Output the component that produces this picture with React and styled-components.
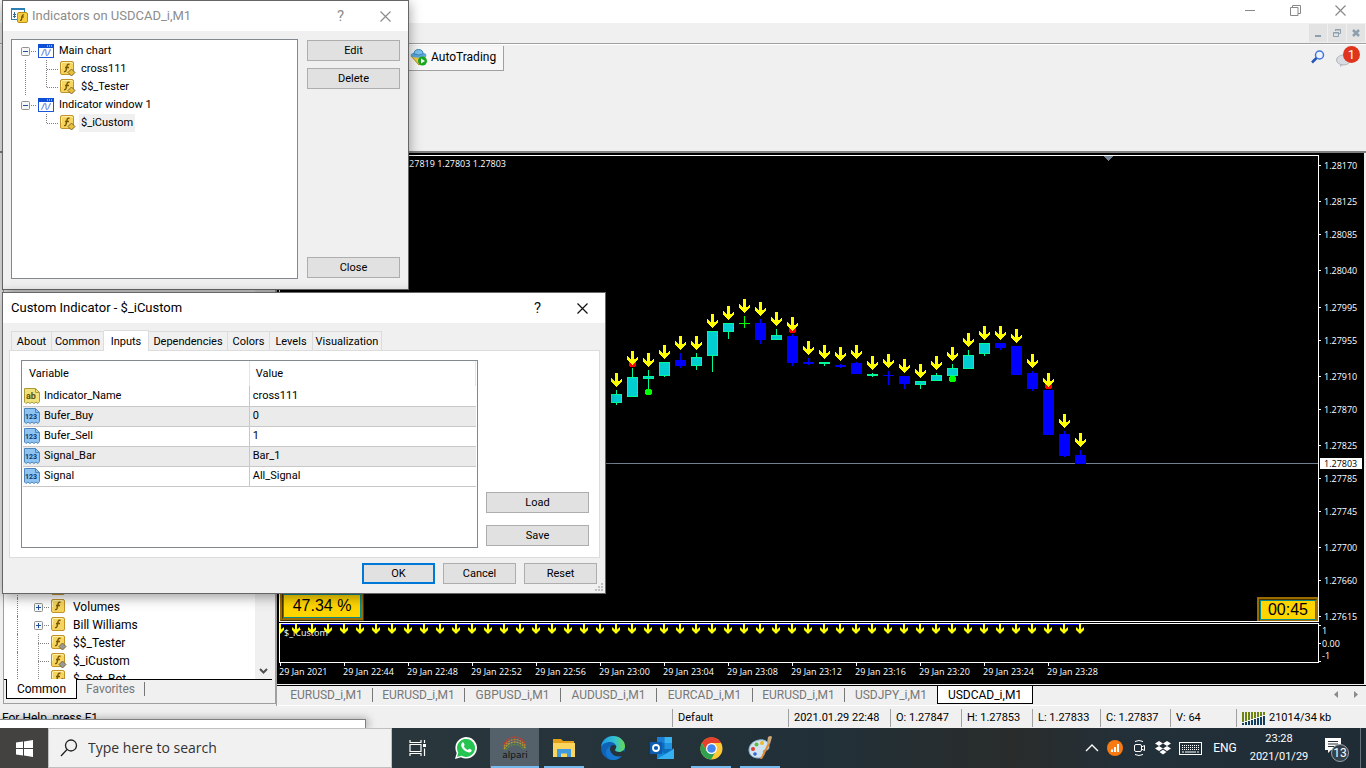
import React from 'react'
import styled, { createGlobalStyle } from 'styled-components'

const candles = [
	{ x: 616, kind: 'up', body: [394, 403], wick: [390, 405], arrow: 373 },
	{ x: 632, kind: 'up', body: [377, 397], wick: [368, 397], arrow: 351, dot: ['#f00', 364] },
	{ x: 648, kind: 'up', body: [376, 379], wick: [370, 391], arrow: 353, dot: ['#0f0', 392] },
	{ x: 664, kind: 'up', body: [362, 376], wick: [362, 377], arrow: 345 },
	{ x: 680, kind: 'down', body: [360, 366], wick: [353, 368], arrow: 336 },
	{ x: 696, kind: 'up', body: [357, 366], wick: [353, 370], arrow: 336 },
	{ x: 712, kind: 'up', body: [331, 356], wick: [331, 372], arrow: 314 },
	{ x: 728, kind: 'up', body: [323, 332], wick: [323, 339], arrow: 306 },
	{ x: 744, kind: 'doji', body: [323, 324], wick: [316, 328], arrow: 299 },
	{ x: 760, kind: 'down', body: [323, 340], wick: [319, 344], arrow: 302 },
	{ x: 776, kind: 'up', body: [335, 340], wick: [329, 340], arrow: 312 },
	{ x: 792, kind: 'down', body: [336, 363], wick: [334, 366], arrow: 317, dot: ['#f00', 330] },
	{ x: 808, kind: 'down', body: [362, 364], wick: [358, 365], arrow: 341 },
	{ x: 824, kind: 'up', body: [362, 364], wick: [362, 366], arrow: 345 },
	{ x: 840, kind: 'down', body: [365, 367], wick: [364, 368], arrow: 347 },
	{ x: 856, kind: 'down', body: [363, 374], wick: [362, 374], arrow: 345 },
	{ x: 872, kind: 'up', body: [374, 376], wick: [373, 377], arrow: 356 },
	{ x: 888, kind: 'down', body: [375, 376], wick: [371, 385], arrow: 354 },
	{ x: 904, kind: 'down', body: [376, 384], wick: [376, 389], arrow: 359 },
	{ x: 920, kind: 'up', body: [381, 385], wick: [381, 389], arrow: 364 },
	{ x: 936, kind: 'up', body: [375, 381], wick: [373, 381], arrow: 356 },
	{ x: 952, kind: 'up', body: [368, 376], wick: [364, 376], arrow: 347, dot: ['#0f0', 379] },
	{ x: 968, kind: 'up', body: [355, 369], wick: [350, 369], arrow: 333 },
	{ x: 984, kind: 'up', body: [343, 354], wick: [343, 356], arrow: 326 },
	{ x: 1000, kind: 'down', body: [343, 348], wick: [343, 350], arrow: 326 },
	{ x: 1016, kind: 'down', body: [346, 375], wick: [346, 375], arrow: 329 },
	{ x: 1032, kind: 'down', body: [373, 389], wick: [371, 391], arrow: 354 },
	{ x: 1048, kind: 'down', body: [390, 435], wick: [390, 435], arrow: 373, dot: ['#f00', 386] },
	{ x: 1064, kind: 'down', body: [434, 456], wick: [431, 457], arrow: 414 },
	{ x: 1080, kind: 'down', body: [455, 464], wick: [450, 464], arrow: 433 },
]
const wickColors = { up: '#00fa9a', down: '#00f', doji: '#0f0' }
const bodyColors = { up: '#00ced1', down: '#00f', doji: '#0f0' }

const prices = [
	['1.28170', 165], ['1.28125', 201], ['1.28085', 234], ['1.28040', 270], ['1.27995', 307],
	['1.27955', 340], ['1.27910', 376], ['1.27870', 409], ['1.27825', 445], ['1.27785', 478],
	['1.27745', 511], ['1.27700', 547], ['1.27660', 580], ['1.27615', 616],
]
const times = ['2021', '22:44', '22:48', '22:52', '22:56', '23:00', '23:04', '23:08', '23:12', '23:16', '23:20', '23:24', '23:28']
const chartTabs = [
	['EURUSD_i,M1', 92], ['EURUSD_i,M1', 92], ['GBPUSD_i,M1', 96], ['AUDUSD_i,M1', 96],
	['EURCAD_i,M1', 96], ['EURUSD_i,M1', 92], ['USDJPY_i,M1', 92],
]
const statusCells = [
	['Default', 116], ['2021.01.29 22:48', 102], ['O: 1.27847', 71], ['H: 1.27853', 71],
	['L: 1.27833', 68], ['C: 1.27837', 70], ['V: 64', 66],
]
const inputs = [
	{ name: 'Indicator_Name', value: 'cross111', text: true },
	{ name: 'Bufer_Buy', value: '0' },
	{ name: 'Bufer_Sell', value: '1' },
	{ name: 'Signal_Bar', value: 'Bar_1' },
	{ name: 'Signal', value: 'All_Signal' },
]

export default function App() {
	return (
		<>
			<GlobalStyle />
			<Desktop>
				<TitleBar>
					<WindowControl aria-label="Minimize"><svg width="11" height="11"><path d="M0 5.500h10" stroke="#888" /></svg></WindowControl>
					<WindowControl aria-label="Restore"><svg width="11" height="11" fill="none" stroke="#888"><path d="M.5 2.500h7.500v8H.5zM2.500 2.500V.5h8v8H8" /></svg></WindowControl>
					<WindowControl aria-label="Close window"><CloseIcon color="#888" /></WindowControl>
				</TitleBar>
				<MenuBar>
					<MdiButton aria-label="Minimize chart"><svg width="10" height="10"><path d="M2 8h6" stroke="#8b9fae" strokeWidth="2" /></svg></MdiButton>
					<MdiButton aria-label="Restore chart"><svg width="10" height="10" fill="none" stroke="#8b9fae"><path d="M1.500 4.500h5v4h-5zM1 5h6M3.500 3V1.500h5v4H7M3 2h6" /></svg></MdiButton>
					<MdiButton aria-label="Close chart"><svg width="10" height="10"><path d="M2 2l6 6M8 2L2 8" stroke="#8b9fae" strokeWidth="2.500" /></svg></MdiButton>
				</MenuBar>
				<ToolBar>
					<AutoTrading><HatIcon />AutoTrading</AutoTrading>
					<ToolBarEnd>
						<svg width="14" height="14" fill="none"><circle cx="8.500" cy="5" r="4" fill="#eef4ff" stroke="#3f76d8" strokeWidth="1.500" /><path d="M5.500 8L1 12.500" stroke="#2356b8" strokeWidth="2.500" /></svg>
						<Messages />
					</ToolBarEnd>
				</ToolBar>
				<Workspace>
					<Navigator />
					<Chart />
				</Workspace>
				<StatusBar>
					<HelpText>For Help, press F1</HelpText>
					{statusCells.map(([text, width]) => <StatusCell key={text} $width={width}>{text}</StatusCell>)}
					<StatusCell $width={130}><TrafficIcon />21014/34 kb</StatusCell>
					<BackWindow />
				</StatusBar>
				<Taskbar />
				<IndicatorsDialog />
				<CustomDialog />
			</Desktop>
		</>
	)
}

function IndicatorsDialog() {
	return (
		<DialogFrame $left={2} $top={0} $width={407} $height={290} role="dialog" aria-label="Indicators">
			<DialogTitle $muted>
				<WindowFIcon />
				<span>Indicators on USDCAD_i,M1</span>
				<DialogControls $color="#8c8c8c" />
			</DialogTitle>
			<ListBody>
				<TreeBox>
					<Branch>
						<BranchHead><Toggle sign="-" /><Dots /><ChartIcon />Main chart</BranchHead>
						<Leaves>
							<Leaf><Dots $wide /><FIcon badge="#e8bf3a" /><LeafName>cross111</LeafName></Leaf>
							<Leaf $last><Dots $wide /><FIcon badge="#e8bf3a" /><LeafName>$$_Tester</LeafName></Leaf>
						</Leaves>
					</Branch>
					<Branch $last>
						<BranchHead><Toggle sign="-" /><Dots /><ChartIcon />Indicator window 1</BranchHead>
						<Leaves>
							<Leaf $last><Dots $wide /><FIcon badge="#e8bf3a" /><LeafName $selected>$_iCustom</LeafName></Leaf>
						</Leaves>
					</Branch>
				</TreeBox>
				<ButtonColumn>
					<Button>Edit</Button>
					<Button>Delete</Button>
					<Button $push>Close</Button>
				</ButtonColumn>
			</ListBody>
		</DialogFrame>
	)
}

function CustomDialog() {
	return (
		<DialogFrame $left={2} $top={292} $width={604} $height={302} role="dialog" aria-label="Custom Indicator">
			<DialogTitle>
				<span>Custom Indicator - $_iCustom</span>
				<DialogControls $color="#111" />
			</DialogTitle>
			<TabStrip role="tablist">
				<Tab $width={41}>About</Tab>
				<Tab $width={52}>Common</Tab>
				<Tab $width={45} $active>Inputs</Tab>
				<Tab $width={79}>Dependencies</Tab>
				<Tab $width={42}>Colors</Tab>
				<Tab $width={43}>Levels</Tab>
				<Tab $width={69}>Visualization</Tab>
			</TabStrip>
			<TabPanel>
				<GridBox>
					<Grid>
						<thead><tr><th>Variable</th><th>Value</th></tr></thead>
						<tbody>
							{inputs.map(item => (
								<tr key={item.name}>
									<td><Cell><TypeIcon text={item.text} />{item.name}</Cell></td>
									<td>{item.value}</td>
								</tr>
							))}
						</tbody>
					</Grid>
				</GridBox>
				<PanelButtons>
					<Button>Load</Button>
					<Button>Save</Button>
				</PanelButtons>
			</TabPanel>
			<DialogFooter>
				<Button $width={73} $primary>OK</Button>
				<Button $width={73}>Cancel</Button>
				<Button $width={73}>Reset</Button>
			</DialogFooter>
			<Grip width="8" height="8" fill="#bfbfbf"><path d="M6 0h2v2H6zM3 3h2v2H3zM6 3h2v2H6zM0 6h2v2H0zM3 6h2v2H3zM6 6h2v2H6z" /></Grip>
		</DialogFrame>
	)
}

function DialogControls({ $color }) {
	return (
		<Controls>
			<WindowControl aria-label="Help" style={{ color: $color }}>?</WindowControl>
			<WindowControl aria-label="Close"><CloseIcon color={$color} /></WindowControl>
		</Controls>
	)
}

function Navigator() {
	return (
		<NavPanel>
			<NavBody>
				<NavTree>
					<NavRow><Toggle sign="+" /><Dots /><FIcon />Oscillators</NavRow>
					<NavRow><Toggle sign="+" /><Dots /><FIcon />Volumes</NavRow>
					<NavRow><Toggle sign="+" /><Dots /><FIcon />Bill Williams</NavRow>
					<NavRow $leaf><Dots $wide /><FIcon badge="#999" />$$_Tester</NavRow>
					<NavRow $leaf><Dots $wide /><FIcon badge="#999" />$_iCustom</NavRow>
					<NavRow $leaf $clipped><Dots $wide /><FIcon badge="#999" />$_Set_Bot</NavRow>
				</NavTree>
				<Scroll><svg width="9" height="6" fill="none"><path d="M1 1l3.500 3.500L8 1" stroke="#505050" strokeWidth="2" /></svg></Scroll>
			</NavBody>
			<NavTabs>
				<NavTab $active>Common</NavTab>
				<NavTab>Favorites</NavTab>
			</NavTabs>
		</NavPanel>
	)
}

function Chart() {
	return (
		<ChartColumn>
			<ChartFrame>
				<PriceRow>
					<Plot>
						<Drawing>
							<g transform="translate(-280 -156)" shapeRendering="crispEdges">
								<path d="M1103 156h11l-5.500 5z" fill="#708090" />
								<rect x="280" y="463" width="100%" height="1" fill="#708090" />
								{candles.map(candle => <Candle key={candle.x} {...candle} />)}
								<text x="506" y="167" textAnchor="end">1.27851 1.27819 1.27803 1.27803</text>
							</g>
						</Drawing>
						<Percent>47.34 %</Percent>
						<Countdown>00:45</Countdown>
					</Plot>
					<Axis>
						<g transform="translate(-1319 -155)" shapeRendering="crispEdges">
							{prices.map(([label, y]) => (
								<g key={label}>
									<rect x="1319" y={y} width="2" height="1" />
									<text x="1324" y={y + 4}>{label}</text>
								</g>
							))}
							<rect x="1320" y="458" width="42" height="11" />
							<text x="1324" y="467" style={{ fill: '#000' }}>1.27803</text>
						</g>
					</Axis>
				</PriceRow>
				<IndicatorRow>
					<Plot>
						<Drawing>
							<g transform="translate(-280 -624)">
								<rect x="280" y="624" width="802" height="1" fill="#00f" />
								<text x="284" y="636">$_iCustom</text>
								{Array.from({ length: 51 }, (_, i) => (
									<path key={i} transform={`translate(${280 + i * 16} 624)`} d="M-1 0H1V5.500L4 3V6L0 10L-4 6V3L-1 5.500Z" fill="#ff0" />
								))}
							</g>
						</Drawing>
					</Plot>
					<Axis>
						<g transform="translate(-1319 -623)">
							<rect x="1319" y="625" width="2" height="1" />
							<rect x="1319" y="643" width="2" height="1" />
							<rect x="1319" y="661" width="2" height="1" />
							<text x="1322" y="634">1</text>
							<text x="1322" y="647">0.00</text>
							<text x="1322" y="659">-1</text>
						</g>
					</Axis>
				</IndicatorRow>
				<TimeAxis>{times.map(time => <Time key={time}>29 Jan {time}</Time>)}</TimeAxis>
			</ChartFrame>
			<ChartTabs>
				{chartTabs.map(([name, width], i) => <ChartTab key={i} $width={width} $last={i === 6}>{name}</ChartTab>)}
				<ChartTab $width={96} $active>USDCAD_i,M1</ChartTab>
				<TabArrows width="26" height="8" fill="#8a8a8a"><path d="M4 0v7L0 3.500zM20 0v7l4-3.500z" /></TabArrows>
			</ChartTabs>
		</ChartColumn>
	)
}

function Candle({ x, kind, body: [top, bottom], wick, arrow, dot }) {
	return (
		<g>
			<rect x={x} y={wick[0]} width="1" height={wick[1] - wick[0]} fill={wickColors[kind]} />
			<rect x={x - 5} y={top} width="11" height={bottom - top} fill={wickColors[kind]} />
			{bottom - top > 2 && <rect x={x - 4} y={top + 1} width="9" height={bottom - top - 2} fill={bodyColors[kind]} />}
			{dot && <circle cx={x + 0.5} cy={dot[1]} r="3.500" fill={dot[0]} />}
			<path transform={`translate(${x + 0.5} ${arrow})`} d="M-1.500 0H1.500V8H2.500L5.500 5V8L0 14L-5.500 8V5L-2.500 8H-1.500Z" fill="#ff0" />
		</g>
	)
}

function Taskbar() {
	return (
		<Bar>
			<StartButton aria-label="Start">
				<svg width="17" height="17" fill="#fff"><path d="M0 2.500L7 1.500V8H0zM8 1.400L17 0V8H8zM0 9H7V15.500L0 14.500zM8 9H17V17L8 15.600z" /></svg>
			</StartButton>
			<SearchBox>
				<svg width="18" height="18" fill="none" stroke="#222" strokeWidth="1.300"><circle cx="11" cy="6.500" r="5.500" /><path d="M7 10.500L1 17" /></svg>
				<input type="text" aria-label="Search" placeholder="Type here to search" />
			</SearchBox>
			<TaskButton aria-label="Task view"><TaskViewIcon /></TaskButton>
			<TaskButton aria-label="WhatsApp"><WhatsAppIcon /></TaskButton>
			<TaskButton aria-label="Alpari" $line={48} $active><Alpari><AlpariArc />alpari</Alpari></TaskButton>
			<TaskButton aria-label="File Explorer" $line={40}><FolderIcon /></TaskButton>
			<TaskButton aria-label="Edge"><EdgeIcon /></TaskButton>
			<TaskButton aria-label="Outlook"><OutlookIcon /></TaskButton>
			<TaskButton aria-label="Chrome" $line={40}><ChromeIcon /></TaskButton>
			<TaskButton aria-label="Paint" $line={40}><PaintIcon /></TaskButton>
			<Tray>
				<svg width="14" height="8" fill="none"><path d="M1 7l6-6 6 6" stroke="#fff" strokeWidth="1.400" /></svg>
				<svg width="16" height="16"><circle cx="8" cy="8" r="8" fill="#f97a12" /><path d="M4 9.500h2V12H4zM7 7h2v5H7zM10 4h2v8h-2z" fill="#fff" /></svg>
				<svg width="16" height="16" fill="none" stroke="#fff"><rect x="3.500" y="4.500" width="7" height="7" rx="1.500" /><path d="M10.500 7l3-1.500v5l-3-1.500M4 1.500q4-2 8 0M4 14.500q4 2 8 0" /></svg>
				<svg width="16" height="14" fill="#fff"><path d="M4 0l4 2.500L4 5 0 2.500zM12 0l4 2.500L12 5 8 2.500zM4 5l4 2.500L4 10 0 7.500zM12 5l4 2.500L12 10 8 7.500zM4.500 11L8 8.800l3.500 2.200L8 13.500z" /></svg>
				<svg width="23" height="13" fill="none" stroke="#fff"><rect x=".5" y=".5" width="22" height="12" /><path d="M3 3.500h17M3 5.500h17M3 7.500h17" strokeDasharray="1 1" /><path d="M3 10h2M6 10h11M18 10h2" /></svg>
				<Language>ENG</Language>
				<Clock><span>23:28</span><span>2021/01/29</span></Clock>
				<Notices>
					<svg width="26" height="26"><path d="M1 1h16v12H7l-3 3v-3H1z" fill="#fff" /><path d="M4 4.500h10M4 7h10M4 9.500h7" stroke="#263238" /><circle cx="16" cy="16" r="8.500" fill="#33414a" stroke="#9aa3a8" /><text x="16" y="20" textAnchor="middle" fill="#fff">13</text></svg>
				</Notices>
			</Tray>
		</Bar>
	)
}

//-----Icons-----
const CloseIcon = ({ color }) => (
	<svg width="11" height="11"><path d="M.5 .5l10 10M10.500 .5l-10 10" stroke={color} strokeWidth="1.200" /></svg>
)
const Toggle = ({ sign }) => (
	<svg width="9" height="9" fill="none"><rect x=".5" y=".5" width="8" height="8" rx="1" fill="#f7f7f7" stroke="#919191" /><path d={sign === '+' ? 'M2 4.500h5M4.500 2v5' : 'M2 4.500h5'} stroke="#1e4f9e" /></svg>
)
const ChartIcon = () => (
	<svg width="16" height="14" fill="none"><rect x=".5" y=".5" width="15" height="13" fill="#fff" stroke="#1c56d6" /><path d="M0 0h16v4H0z" fill="#0f4fd6" /><path d="M9 2h1M11 2h1M13 2h1" stroke="#fff" /><path d="M3 11.500c2 0 2-6 4-6s0 6 2 6 2-6 4-6" stroke="#7c9ee8" strokeWidth="1.300" /></svg>
)
const FIcon = ({ badge }) => (
	<svg width="16" height="16" fill="none"><rect x=".5" y=".5" width="13" height="13" rx="1.500" fill="#f5d55f" stroke="#c1922a" /><path d="M1.500 8V3q0-1.500 1.500-1.500h8q1.500 0 1.500 1.500" stroke="#fff0a8" /><path d="M9.500 3.500q-2-1-2.500 1.500L6 9.500q-.5 1.500-2 1M5 6.500h4" stroke="#7a5600" strokeWidth="1.400" />{badge && <path d="M11.500 8l3.500 3.500-3.500 3.500L8 11.500z" fill={badge} stroke="#806a34" />}</svg>
)
const WindowFIcon = () => (
	<svg width="17" height="16" fill="none"><rect x=".5" y=".5" width="13" height="11" fill="#fff" stroke="#2c80b4" /><path d="M0 1h14" stroke="#2c80b4" strokeWidth="2" /><path d="M3.500 4v6M2 6.500h3M2 8.500h3" stroke="#326b94" /><rect x="6.500" y="4.500" width="10" height="10" rx="1.500" fill="#f7ce3c" stroke="#bd8b1a" /><path d="M13 7q-1.500-.5-1.800 1l-.7 3.500q-.3 1-1.500.8M10 9h3" stroke="#6d4d00" strokeWidth="1.200" /></svg>
)
const TypeIcon = ({ text }) => (
	<svg width="16" height="16">
		<path d="M.5 .5h11l4 4v9l-1.500 2-2-1.500-2 1.500-2-1.500-2 1.500-2-1.500-2 1.500-1.500-1.500z" fill={text ? '#f2e27c' : '#8fc3f2'} stroke={text ? '#a99b3c' : '#4d86bd'} />
		<path d="M11.500 .5v4h4" fill="none" stroke={text ? '#a99b3c' : '#4d86bd'} />
		<text x="7" y="11" textAnchor="middle" fontSize={text ? 9 : 7} fontWeight="700" fill={text ? '#5c5210' : '#12395f'}>{text ? 'ab' : '123'}</text>
	</svg>
)
const HatIcon = () => (
	<svg width="18" height="17" fill="none"><path d="M1 7l8 9 7-9z" fill="#f2c744" stroke="#b98b1c" /><ellipse cx="8.500" cy="6" rx="8" ry="2.800" fill="#5ba7dc" /><path d="M4 5q0-4.500 4.500-4.500T13 5q-4.500 2-9 0z" fill="#7cc0ea" stroke="#3b86ba" /><circle cx="12.500" cy="12" r="4.500" fill="#16a81e" /><path d="M11 9.500v5l4-2.500z" fill="#fff" /></svg>
)
const Messages = () => (
	<svg width="24" height="22"><ellipse cx="7.500" cy="14" rx="7" ry="5" fill="#d9dbe2" stroke="#b4b6bd" /><path d="M4 18v3l4-3z" fill="#b9bbc2" /><circle cx="15.500" cy="8.500" r="8.500" fill="#e0341c" /><text x="15.500" y="13" textAnchor="middle" fontSize="13" fill="#fff">1</text></svg>
)
const TrafficIcon = () => (
	<svg width="23" height="13">
		{[0, 1, 2, 3, 4, 5, 6, 7].map(i => (
			<g key={i}><rect x={i * 3} y="0" width="2" height={10 - i} fill="#6f8512" /><rect x={i * 3} y={11 - i} width="2" height={2 + i} fill="#123f60" /></g>
		))}
	</svg>
)
const TaskViewIcon = () => (
	<svg width="17" height="16" fill="none" stroke="#fff" strokeWidth="1.200"><path d="M1 0v2.500h11V0M1 16v-2.500h11V16M1 4.500h11v7H1zM15.500 0v3M15.500 8.500V16" /><path d="M14 4h3v3h-3z" fill="#fff" stroke="none" /></svg>
)
const WhatsAppIcon = () => (
	<svg width="24" height="24"><path d="M1 23l1.700-6A10.800 10.800 0 1 1 7 21.300z" fill="#fff" /><path d="M3 21l1.300-4.400A9 9 0 1 1 7.600 19.800z" fill="#25c451" /><path d="M8.500 6.500c.6-.5 1-.2 1.300.4l.8 1.800c.2.6-.8 1.200-.8 1.600.8 1.700 2.200 2.900 4 3.600.6-.1 1-1.400 1.600-1.200l2 1c.6.4.2 1.500-.3 2-1.400 1.300-3.400.8-5.500-.4-2-1.200-3.600-3-4.300-5-.4-1.400 0-2.900 1.200-3.800z" fill="#fff" /></svg>
)
const AlpariArc = () => (
	<svg width="24" height="14" fill="none" strokeWidth="1.300" strokeDasharray="2 1"><path d="M1 8Q6 1 12 1t11 7" stroke="#c4402e" /><path d="M1 10.500Q6 3.500 12 3.500t11 7" stroke="#d07f2b" /><path d="M1 13Q6 6 12 6t11 7" stroke="#b7a52c" /><path d="M3 13.500Q7 8.500 12 8.500t9 5" stroke="#5f9038" /></svg>
)
const FolderIcon = () => (
	<svg width="22" height="18"><path d="M0 0h8l2 2h11v4H0z" fill="#e4a018" /><path d="M0 4h22v14H0z" fill="#fbd65e" /><path d="M4 10h14v8h-4v-3.500H8V18H4z" fill="#3f9ae0" /></svg>
)
const EdgeIcon = () => (
	<svg width="24" height="24"><defs><linearGradient id="edge" x1="0" x2="1"><stop offset="0" stopColor="#1a9be6" /><stop offset=".6" stopColor="#36c3cf" /><stop offset="1" stopColor="#68d84a" /></linearGradient></defs><circle cx="12" cy="12" r="12" fill="#0f62b5" /><path d="M0 11C1 4 6 0 12 0c7 0 12 5 12 10 0 4-3 6-6 6-2.500 0-4-1-4-2s1.500-1.500 1-4c-.5-2.500-3-4-6-4-4.500 0-8 2.500-9 5z" fill="url(#edge)" /><path d="M9 12c0 5 4 8 8.500 8 2 0 3.500-.5 4.500-1.500C20 22 16 24 12 24 7 24 5 20 5 17c0-4 2.500-6.500 5-7-1 .8-1 1-1 2z" fill="#1677d0" /><path d="M15 9.500c1 2.500-1 3.300-1 4.500 0 1 1.500 2 4 2 2 0 3.500-.8 4.600-1.800L24 20l-6 .5c-5 0-9-3.500-9-8C9 11 10 9.500 12 9z" fill="#25343b" /></svg>
)
const OutlookIcon = () => (
	<svg width="24" height="22"><path d="M7 0h15v18H7z" fill="#0f6cbd" /><path d="M7 0h7.500v6H7z" fill="#1a7fd4" /><path d="M14.500 0H22v6h-7.500z" fill="#39b2ef" /><path d="M14.500 6H22v6h-7.500z" fill="#1f93e0" /><path d="M7 12l8.500 5L24 11v11H7z" fill="#1486d8" /><path d="M7 22l17-10v10z" fill="#35b0f0" /><path d="M0 5h12v12H0z" fill="#0c5db0" /><circle cx="6" cy="11" r="3" fill="none" stroke="#fff" strokeWidth="1.800" /></svg>
)
const ChromeIcon = () => (
	<svg width="23" height="23"><circle cx="11.500" cy="11.500" r="11" fill="#fcc934" /><path d="M1.900 6A11 11 0 0 1 21.100 6H11.500L6.500 14z" fill="#e5412e" /><path d="M1.900 6A11 11 0 0 0 11 22.500l5-8.500H6.500z" fill="#2ea24e" /><circle cx="11.500" cy="11.500" r="5.500" fill="#fff" /><circle cx="11.500" cy="11.500" r="4.300" fill="#4486f0" /></svg>
)
const PaintIcon = () => (
	<svg width="24" height="24"><path d="M11 4c6-1 10 2 10 7 0 3-2 3-4 3s-2 2-1 4c0 2-2 4-6 4-5 0-9-3-9-8S5 5 11 4z" fill="#cfe3f1" stroke="#8fb3ca" /><circle cx="5" cy="13" r="2" fill="#dd3c2e" /><circle cx="8.500" cy="8.500" r="2" fill="#5ebd3d" /><circle cx="14" cy="7" r="2" fill="#efb72c" /><circle cx="7" cy="18" r="1.800" fill="#3366c9" /><path d="M12 23L20 7l2 1-8 15z" fill="#e58a2e" /><path d="M19 7l1-6q3-2 4 0l-2 7z" fill="#cda77b" /></svg>
)

//-----Page-----
const GlobalStyle = createGlobalStyle`
	* {
		box-sizing: border-box;
	}
	body {
		margin: 0;
		overflow: hidden;
		font: 12px/18px Roboto, sans-serif;
		color: #000;
	}
	button, input {
		font: inherit;
		color: inherit;
		border: 0;
		padding: 0;
		background: none;
	}
	svg {
		flex: none;
	}
`;
const Desktop = styled.div`
	position: relative;
	display: flex;
	flex-direction: column;
	height: 100vh;
	background: #f0f0f0;
	overflow: hidden;
`;
const TitleBar = styled.div`
	display: flex;
	justify-content: flex-end;
	height: 23px;
	padding: 0 3px 2px 0;
	background: #fff;
`;
const WindowControl = styled.button`
	display: flex;
	align-items: center;
	justify-content: center;
	width: 45px;
	font-size: 15px;
`;
const MenuBar = styled.div`
	display: flex;
	justify-content: flex-end;
	gap: 1px;
	height: 21px;
	padding: 1px 1px 1px 0;
	border-bottom: 1px solid #a0a0a0;
	box-shadow: 0 1px #fff;
`;
const MdiButton = styled.button`
	display: flex;
	align-items: center;
	justify-content: center;
	width: 18px;
	background: #e3e3e3;
`;
const ToolBar = styled.div`
	display: flex;
	align-items: flex-start;
	justify-content: space-between;
	height: 107px;
	padding: 2px 6px 0 404px;
`;
const AutoTrading = styled.button`
	display: flex;
	align-items: center;
	gap: 3px;
	height: 25px;
	padding: 0 7px 2px 6px;
	background: #f7f7f7;
	border-right: 1px solid #a0a0a0;
	border-bottom: 1px solid #a0a0a0;
`;
const ToolBarEnd = styled.div`
	display: flex;
	align-items: center;
	gap: 11px;
`;
const Workspace = styled.div`
	display: flex;
	flex: 1;
	min-height: 0;
	border-top: 2px solid #808080;
`;

//-----Navigator-----
const NavPanel = styled.div`
	display: flex;
	flex-direction: column;
	width: 273px;
	margin-left: 3px;
	padding-bottom: 4px;
	border: solid #a0a0a0;
	border-width: 0 1px 1px;
	margin-bottom: 2px;
`;
const NavBody = styled.div`
	display: flex;
	flex: 1;
	min-height: 0;
	margin-right: 3px;
	border-bottom: 1px solid #000;
`;
const NavTree = styled.div`
	display: flex;
	flex: 1;
	flex-direction: column;
	justify-content: flex-end;
	padding-left: 13px;
	background: #fff;
	overflow: hidden;
`;
const NavRow = styled.div`
	display: flex;
	flex: none;
	align-items: ${props => props.$clipped ? 'flex-start' : 'center'};
	height: ${props => props.$clipped ? '9px' : '18px'};
	padding-left: ${props => props.$leaf ? '19px' : '16px'};
	border-left: 1px dotted #808080;
	overflow: hidden;
	background: ${props => props.$leaf ? 'linear-gradient(#909090 50%, transparent 50%) 20px 0 / 1px 2px repeat-y' : 'none'};

	svg + svg, span + svg {
		margin-right: 6px;
	}
	span {
		visibility: ${props => props.$clipped ? 'hidden' : 'visible'};
	}
`;
const Scroll = styled.div`
	display: flex;
	align-items: flex-end;
	justify-content: center;
	width: 17px;
	padding-bottom: 5px;
`;
const NavTabs = styled.div`
	display: flex;
	height: 19px;
	padding-left: 2px;
`;
const NavTab = styled.button`
	width: ${props => props.$active ? '71px' : '68px'};
	margin-top: ${props => props.$active ? '-1px' : '2px'};
	height: ${props => props.$active ? '20px' : '14px'};
	line-height: 14px;
	color: ${props => props.$active ? '#000' : '#777'};
	background: ${props => props.$active ? '#fff' : 'none'};
	border: solid ${props => props.$active ? '#000' : '#777'};
	border-width: ${props => props.$active ? '0 1px 1px' : '0 1px 0 0'};
`;

//-----Chart-----
const ChartColumn = styled.div`
	display: flex;
	flex: 1;
	flex-direction: column;
	min-width: 0;
	border-left: 1px solid #a0a0a0;
`;
const ChartFrame = styled.div`
	display: flex;
	flex: 1;
	flex-direction: column;
	min-height: 0;
	margin: 0 2px 1px 0;
	padding: 2px 0 0 2px;
	background: #000;
	font: 9px/12px 'Open Sans', sans-serif;
	color: #fff;
`;
const PriceRow = styled.div`
	display: flex;
	flex: 1;
	min-height: 0;
	margin-bottom: 1px;
`;
const IndicatorRow = styled.div`
	display: flex;
	height: 40px;
`;
const Plot = styled.div`
	position: relative;
	flex: 1;
	min-width: 0;
	border: 1px solid #fff;
	overflow: hidden;
`;
const Drawing = styled.svg`
	display: block;
	width: 100%;
	height: 100%;
	fill: #fff;
`;
const Axis = styled.svg`
	width: 45px;
	height: 100%;
	fill: #fff;
`;
const Badge = styled.div`
	position: absolute;
	background: #ffd500;
	color: #000;
	font: 16px/22px 'Liberation Sans', sans-serif;
	text-align: center;
	border: 1px solid #0b8a8a;
	outline: 3px ridge #9a6c00;
`;
const Percent = styled(Badge)`
	left: 3px;
	bottom: 3px;
	width: 78px;
	height: 24px;
`;
const Countdown = styled(Badge)`
	right: 2px;
	bottom: 1px;
	width: 56px;
	height: 20px;
	line-height: 18px;
`;
const TimeAxis = styled.div`
	display: flex;
	height: 21px;
	overflow: hidden;
`;
const Time = styled.span`
	flex: none;
	width: 64px;
	white-space: nowrap;

	&:before {
		content: '';
		display: block;
		width: 1px;
		height: 3px;
		margin-left: 1px;
		background: #fff;
	}
`;
const ChartTabs = styled.div`
	display: flex;
	height: 21px;
	padding-left: 4px;
	border-top: 1px solid #000;
	border-bottom: 1px solid #fff;
`;
const ChartTab = styled.button`
	width: ${props => props.$width}px;
	height: ${props => props.$active ? '18px' : '14px'};
	margin-top: ${props => props.$active ? '0' : '2px'};
	line-height: 14px;
	color: ${props => props.$active ? '#000' : '#777'};
	background: ${props => props.$active ? '#fff' : 'none'};
	border: solid ${props => props.$active ? '#000' : '#777'};
	border-width: ${props => props.$active ? '0 1px 1px' : props.$last ? '0' : '0 1px 0 0'};
`;
const TabArrows = styled.svg`
	margin: 5px 6px 0 auto;
`;

//-----StatusBar-----
const StatusBar = styled.div`
	position: relative;
	display: flex;
	align-items: center;
	height: 22px;
	padding-top: 2px;
	font-size: 11px;
`;
const HelpText = styled.div`
	flex: 1;
	padding-left: 2px;
	font-size: 12px;
`;
const StatusCell = styled.div`
	display: flex;
	align-items: center;
	gap: 4px;
	width: ${props => props.$width}px;
	padding-left: 5px;
	border-left: 1px solid #a0a0a0;
`;
const BackWindow = styled.div`
	position: absolute;
	left: 0;
	bottom: 0;
	width: 366px;
	height: 9px;
	background: #fff;
	border: solid #808080;
	border-width: 1px 1px 0 0;
	box-shadow: 2px 0 8px rgba(0, 0, 0, .35);
`;

//-----Taskbar-----
const Bar = styled.div`
	position: relative;
	display: flex;
	height: 40px;
	background: linear-gradient(90deg, #29363c 30%, #213038 60%, #292c2b 74%, #22303a 84%, #1f2b35);
	color: #fff;
`;
const StartButton = styled.button`
	display: flex;
	align-items: center;
	justify-content: center;
	width: 48px;
	background: #434241;
`;
const SearchBox = styled.label`
	display: flex;
	align-items: center;
	gap: 10px;
	width: 344px;
	padding-left: 11px;
	background: #f1f1f1;
	border: 1px solid #c0c0c0;

	input {
		flex: 1;
		font: 14px/20px 'Open Sans', sans-serif;
	}
	input::placeholder {
		color: #333;
		opacity: 1;
	}
`;
const TaskButton = styled.button`
	display: flex;
	align-items: center;
	justify-content: center;
	width: 49px;
	padding-left: 1px;
	background: linear-gradient(#76b9ed, #76b9ed) center bottom / ${props => props.$line || 0}px 2px no-repeat ${props => props.$active ? '#55616a' : 'transparent'};
`;
const Alpari = styled.span`
	display: flex;
	flex-direction: column;
	align-items: center;
	font: 9px/10px 'DejaVu Sans', sans-serif;
	color: #111;
`;
const Tray = styled.div`
	display: flex;
	align-items: center;
	gap: 8px;
	margin-left: auto;
	padding-right: 5px;
	font-size: 12px;
`;
const Language = styled.span`
	width: 30px;
	text-align: center;
`;
const Clock = styled.span`
	display: flex;
	flex-direction: column;
	width: 62px;
	font-size: 11px;
	text-align: center;
`;
const Notices = styled.span`
	display: flex;
	align-items: center;
	height: 40px;
	margin-left: 6px;
	padding: 4px 10px 0 0;
	border-right: 1px solid #66727a;
`;

//-----Dialogs-----
const DialogFrame = styled.div`
	position: absolute;
	left: ${props => props.$left}px;
	top: ${props => props.$top}px;
	display: flex;
	flex-direction: column;
	width: ${props => props.$width}px;
	height: ${props => props.$height}px;
	background: #f0f0f0;
	border: 1px solid #666;
	box-shadow: 0 3px 12px rgba(0, 0, 0, .4);
	font-size: 11px;
`;
const DialogTitle = styled.div`
	display: flex;
	align-items: center;
	gap: 4px;
	height: 30px;
	padding-left: 8px;
	background: #fff;
	color: ${props => props.$muted ? '#8c8c8c' : '#000'};
	font-size: 13px;
`;
const Controls = styled.div`
	display: flex;
	margin-left: auto;
`;
const Button = styled.button`
	width: ${props => props.$width ? props.$width + 'px' : 'auto'};
	height: 21px;
	margin-top: ${props => props.$push ? 'auto' : '0'};
	line-height: 17px;
	background: #e1e1e1;
	border: ${props => props.$primary ? '2px solid #0078d7' : '1px solid #adadad'};
`;
const ListBody = styled.div`
	display: flex;
	flex: 1;
	gap: 9px;
	padding: 8px 8px 10px;
`;
const TreeBox = styled.div`
	flex: 1;
	padding: 2px 9px;
	background: #fff;
	border: 1px solid #828790;
`;
const ButtonColumn = styled.div`
	display: flex;
	flex-direction: column;
	gap: 7px;
	width: 93px;
	padding: 1px 0;
`;
const Branch = styled.div`
	background: ${props => props.$last ? 'none' : 'linear-gradient(#808080 50%, transparent 50%) 4px 0 / 1px 2px repeat-y'};
`;
const BranchHead = styled.div`
	display: flex;
	align-items: center;
	height: 18px;
	background: #fff;

	svg + span + svg {
		margin-right: 5px;
	}
`;
const Dots = styled.span`
	flex: none;
	width: ${props => props.$wide ? '12px' : '6px'};
	height: 1px;
	margin: 0 1px;
	background: repeating-linear-gradient(90deg, #808080 0 1px, transparent 1px 2px);
`;
const Leaves = styled.div`
	margin-left: 25px;
`;
const Leaf = styled.div`
	display: flex;
	align-items: center;
	height: 18px;

	&:before {
		content: '';
		align-self: flex-start;
		width: 1px;
		height: ${props => props.$last ? '9px' : '18px'};
		margin-right: -1px;
		background: linear-gradient(#808080 50%, transparent 50%) 0 0 / 1px 2px repeat-y;
	}
`;
const LeafName = styled.span`
	margin-left: 3px;
	padding: 0 2px;
	background: ${props => props.$selected ? '#f0f0f0' : 'none'};
`;
const TabStrip = styled.div`
	display: flex;
	align-items: flex-end;
	height: 27px;
	padding: 0 8px;
`;
const Tab = styled.button`
	position: relative;
	z-index: ${props => props.$active ? 1 : 0};
	width: ${props => props.$width}px;
	height: ${props => props.$active ? '21px' : '19px'};
	margin-bottom: ${props => props.$active ? '-1px' : '0'};
	line-height: 17px;
	white-space: nowrap;
	background: ${props => props.$active ? '#fff' : '#f0f0f0'};
	border: solid #dcdcdc;
	border-width: 1px 1px 0 0;

	&:first-child {
		border-left-width: 1px;
	}
`;
const TabPanel = styled.div`
	display: flex;
	gap: 8px;
	height: 208px;
	margin: 0 5px 0 6px;
	padding: 9px 10px 9px 11px;
	background: #fff;
	border: 1px solid #dcdcdc;
`;
const GridBox = styled.div`
	flex: 1;
	padding: 0 1px;
	border: 1px solid #828790;
`;
const Grid = styled.table`
	width: 100%;
	border-collapse: collapse;
	table-layout: fixed;

	th {
		height: 25px;
		padding: 0 6px;
		font-weight: 400;
		text-align: left;
		border-right: 1px solid #e5e5e5;
	}
	td {
		height: 20px;
		padding: 0 3px;
		border-bottom: 1px solid #c8c8c8;
	}
	td:first-child {
		padding: 0 1px;
		border-right: 1px solid #c8c8c8;
	}
	tbody tr:nth-child(even) {
		background: #ebebeb;
	}
`;
const Cell = styled.div`
	display: flex;
	align-items: center;
	gap: 4px;
`;
const PanelButtons = styled.div`
	display: flex;
	flex-direction: column;
	justify-content: flex-end;
	gap: 12px;
	width: 103px;
	padding-bottom: 2px;
`;
const DialogFooter = styled.div`
	display: flex;
	justify-content: flex-end;
	gap: 8px;
	padding: 5px 8px;
`;
const Grip = styled.svg`
	position: absolute;
	right: 2px;
	bottom: 2px;
`;
